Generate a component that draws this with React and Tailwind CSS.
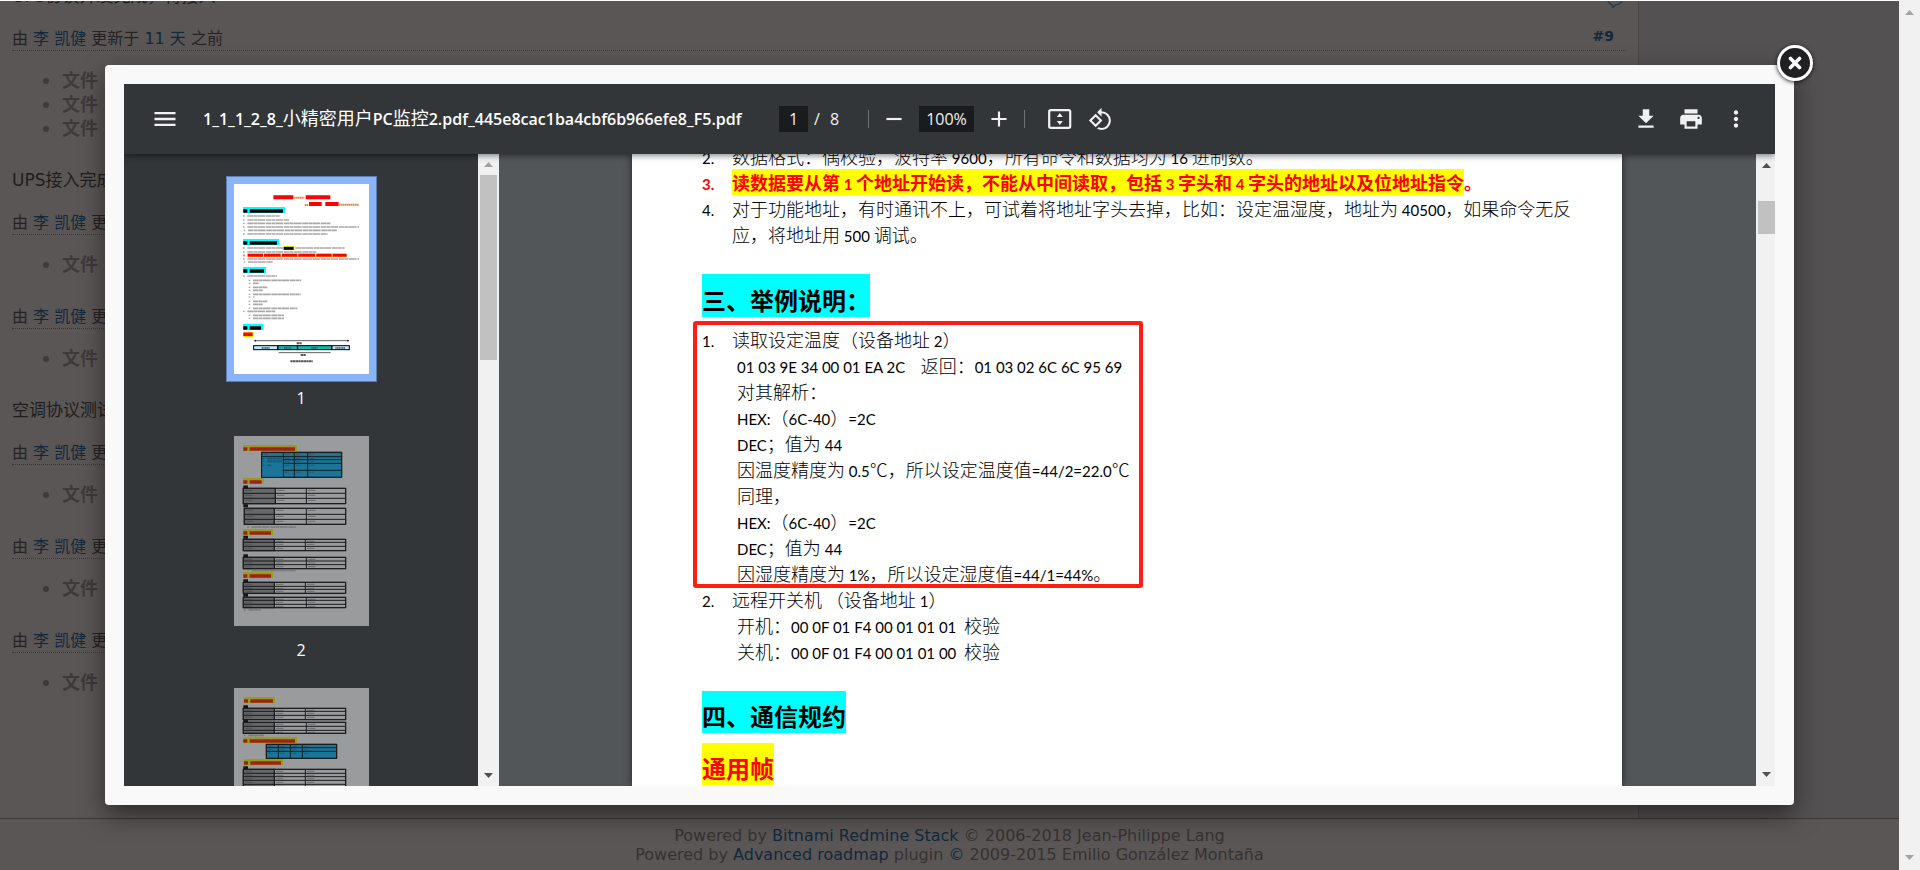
import React, { useState } from 'react'
import {
  MdMenu,
  MdRemove,
  MdAdd,
  MdRotate90DegreesCcw,
  MdFileDownload,
  MdPrint,
  MdMoreVert
} from 'react-icons/md'

const journals = [
  { id: 1, time: '11 天', files: 3, note: 'UPS接入完成' },
  { id: 2, files: 1 },
  { id: 3, files: 1, note: '空调协议测试' },
  { id: 4, files: 1 },
  { id: 5, files: 1 },
  { id: 6, files: 1 }
]

const readExample = [
  '01 03 9E 34 00 01 EA 2C    返回：01 03 02 6C 6C 95 69',
  '对其解析：',
  'HEX:（6C-40）=2C',
  'DEC；值为 44',
  '因温度精度为 0.5℃，所以设定温度值=44/2=22.0℃',
  '同理，',
  'HEX:（6C-40）=2C',
  'DEC；值为 44',
  '因湿度精度为 1%，所以设定湿度值=44/1=44%。'
]

const powerExample = [
  '开机：00 0F 01 F4 00 01 01 01  校验',
  '关机：00 0F 01 F4 00 01 01 00  校验'
]

// 西文和中文使用不同的字体与字号
const Mixed = ({ text, bold }) =>
  text.split(/([\x20-\x7e]+)/).map((part, i) =>
    i % 2 ? (
      <span
        key={i}
        className={
          bold
            ? "font-['Lato','Noto_Sans_CJK_SC',sans-serif] text-[15px] font-bold leading-none"
            : "font-['Lato','Noto_Sans_CJK_SC',sans-serif] text-[15px] font-normal leading-none"
        }
      >
        {part}
      </span>
    ) : (
      part
    )
  )

const Arrow = ({ down, className }) => (
  <svg width="9" height="5" viewBox="0 0 9 5" className={className} aria-hidden="true">
    <path d={down ? 'M0 0h9L4.500 5z' : 'M0 5h9L4.500 0z'} fill="currentColor" />
  </svg>
)

const Journal = ({ time, files, note }) => (
  <section>
    <h4 className="border-b border-dotted border-[#3b3838] text-base leading-[22px] text-[#252323]">
      由 <a href="#user" className="text-[#12283c]">李 凯健</a> 更新于{' '}
      <a href="#time" className="text-[#12283c]">{time || '12 天'}</a> 之前
    </h4>
    <ul className="mt-[18px] list-none pl-[31px] text-lg font-bold leading-6 text-[#3d3a39]">
      {Array.from({ length: files }, (_, i) => (
        <li key={i} className="flex items-center gap-[13px] leading-6">
          <span className="size-[6px] rounded-full bg-[#3d3a39]" />
          文件
        </li>
      ))}
    </ul>
    {note ? (
      <p className="mb-5 mt-[27px] text-[17px] leading-6 text-[#1f1d1d]">{note}</p>
    ) : (
      <div className="h-[29px]" />
    )}
  </section>
)

const IssuePage = () => (
  <div className="flex h-full flex-col overflow-hidden border-t border-white bg-[#545152] font-['DejaVu_Sans','Noto_Sans_CJK_SC',sans-serif]">
    <div className="flex min-h-0 flex-1">
      <main className="min-w-0 flex-1 overflow-hidden border-r border-[#4a4747] bg-[#5a5655] px-3">
        <div className="-mt-[17px] mb-5 flex justify-between text-[17px] leading-6 text-[#1f1d1d]">
          <p>UPS协议开发完成，待接入</p>
          <svg className="mr-[3px]" width="16" height="24" viewBox="0 0 16 24" fill="none" stroke="#2c3e50" strokeWidth="1.500">
            <path d="M1 16c0-3 3-5 7-5s7 2 7 5-4 5-7 5l-2 3-1-3c-2-1-4-3-4-5z" />
          </svg>
        </div>
        <div className="relative">
          <a href="#note-9" className="absolute right-3 top-0 text-sm font-bold leading-4 text-[#12283c]">#9</a>
          {journals.map((j) => (
            <Journal key={j.id} {...j} />
          ))}
        </div>
      </main>
      <aside className="w-[260px] shrink-0" />
    </div>
    <footer className="h-[52px] border-t border-[#3a3737] bg-[#5a5655] pt-[7px] text-center text-base leading-[19px] text-[#363231]">
      <p>
        Powered by <a href="#redmine" className="text-[#12283c]">Bitnami Redmine Stack</a> © 2006-2018 Jean-Philippe Lang
      </p>
      <p>
        Powered by <a href="#roadmap" className="text-[#12283c]">Advanced roadmap</a> plugin{' '}
        <a href="#license" className="text-[#12283c]">©</a> 2009-2015 Emilio González Montaña
      </p>
    </footer>
  </div>
)

const FitIcon = () => (
  <svg width="24" height="20" viewBox="0 0 24 20" aria-hidden="true">
    <rect x="1.200" y="1.200" width="21" height="17.600" rx="1.500" fill="none" stroke="currentColor" strokeWidth="2.200" />
    <path d="M8.800 8h6L11.800 4zM8.800 12h6l-3 4z" fill="currentColor" />
  </svg>
)

const Toolbar = () => {
  const [page, setPage] = useState('1')
  const [zoom, setZoom] = useState('100%')

  return (
    <div className="relative z-10 flex h-[70px] shrink-0 items-center bg-[#323639] pl-4 pr-[26px] font-['Open_Sans','Noto_Sans_CJK_SC',sans-serif] text-base text-[#f1f1f1] shadow-[0_2px_6px_rgba(0,0,0,0.45)]">
      <button aria-label="菜单" className="ml-[11px] w-7"><MdMenu size={28} /></button>
      <h1 className="ml-6 w-[544px] whitespace-nowrap font-semibold text-white">
        1_1_1_2_8_<span className="text-lg font-normal leading-none">小精密用户</span>PC
        <span className="text-lg font-normal leading-none">监控</span>2.pdf_445e8cac1ba4cbf6b966efe8_F5.pdf
      </h1>
      <input
        aria-label="页码"
        value={page}
        onChange={(e) => setPage(e.target.value)}
        className="ml-8 h-[26px] w-[29px] bg-[#191b1c] text-center"
      />
      <span className="ml-[6px] w-[10px]">/</span>
      <span className="ml-[6px] w-[10px]">8</span>
      <span className="ml-7 h-[18px] w-px bg-[#6f7274]" />
      <button aria-label="缩小" className="ml-3"><MdRemove size={26} /></button>
      <input
        aria-label="缩放"
        value={zoom}
        onChange={(e) => setZoom(e.target.value)}
        className="ml-3 h-[26px] w-[55px] bg-[#191b1c] text-center"
      />
      <button aria-label="放大" className="ml-3"><MdAdd size={26} /></button>
      <span className="ml-3 h-[18px] w-px bg-[#6f7274]" />
      <button aria-label="适合页面" className="ml-[23px]"><FitIcon /></button>
      <button aria-label="旋转" className="ml-4"><MdRotate90DegreesCcw size={25} /></button>
      <div className="ml-auto flex gap-[19px]">
        <button aria-label="下载"><MdFileDownload size={26} /></button>
        <button aria-label="打印"><MdPrint size={26} /></button>
        <button aria-label="更多"><MdMoreVert size={26} /></button>
      </div>
    </div>
  )
}

// 缩略图里的一行小字: [x, y, 宽度]
const TextRows = ({ rows, color = '#a9a9a9' }) =>
  rows.map(([x, y, w], i) => (
    <g key={i} stroke={color}>
      <path d={`M${x} ${y}h5`} strokeWidth="4" />
      <path d={`M${x + 13} ${y}h${Math.max(w - 13, 4)}`} strokeWidth="5" strokeDasharray="17 1 11 1 23 2" />
    </g>
  ))

const Headline = ({ x, y, w, h = 18, bg, color }) => (
  <g>
    <rect x={x} y={y} width={w} height={h} fill={bg} />
    <path d={`M${x + 1} ${y + h / 2 + 3}h12M${x + 20} ${y + h / 2 + 3}h${w - 26}`} stroke={color} strokeWidth="10" />
  </g>
)

// cols / rows 是网格线的坐标
const Grid = ({ cols, rows, fill, head }) => {
  const [left, right] = [cols[0], cols[cols.length - 1]]
  const [top, bottom] = [rows[0], rows[rows.length - 1]]
  return (
    <g stroke="#1b1c1d" strokeWidth="3">
      <rect x={left} y={top} width={right - left} height={bottom - top} fill={fill} />
      {head && <rect x={left} y={top} width={cols[1] - left} height={bottom - top} fill="#666869" />}
      {cols.map((c) => <path key={`c${c}`} d={`M${c} ${top}V${bottom}`} />)}
      {rows.map((r) => <path key={`r${r}`} d={`M${left} ${r}H${right}`} />)}
      {rows.slice(0, -1).map((r) =>
        cols.slice(0, -1).map((c) => (
          <path key={`${c}-${r}`} d={`M${c + 5} ${r + 6}h${head ? 22 : 14}`} stroke="#3c4042" strokeOpacity="0.500" />
        ))
      )}
    </g>
  )
}

const ThumbOne = () => (
  <svg className="w-full" viewBox="42 42 405 570">
    <rect x="42" y="42" width="405" height="570" fill="#fff" />
    <path d="M160 82h60M257 82h74M267 102h38M316 102h40" stroke="#f00" strokeWidth="12" />
    <path d="M221 83h32M254 105h12M357 104h60" stroke="#e08a4a" strokeWidth="6" strokeDasharray="5 1" />
    <Headline x={69} y={111} w={126} bg="#0ff" color="#000" />
    <TextRows
      rows={[
        [69, 138, 110], [69, 150, 138], [69, 160, 262], [69, 171, 348], [71, 181, 279], [69, 192, 254],
        [69, 234, 120], [213, 234, 161], [69, 246, 220], [69, 267, 348], [71, 276, 88],
        [69, 318, 102], [86, 331, 158], [86, 340, 30], [86, 352, 56], [86, 361, 42], [86, 373, 156], [86, 381, 15],
        [86, 394, 56], [86, 403, 42], [86, 415, 146], [69, 424, 98], [86, 436, 106], [86, 445, 106]
      ]}
    />
    <Headline x={69} y={207} w={108} bg="#0ff" color="#000" />
    <rect x="189" y="228" width="35" height="12" fill="#ff0" />
    <path d="M191 235h30" stroke="#000" strokeWidth="9" />
    <rect x="81" y="250" width="299" height="12" fill="#ff0" />
    <path d="M83 256h297" stroke="#f00" strokeWidth="9" strokeDasharray="46 3 50 4" />
    <path d="M69 256h6" stroke="#e08a4a" strokeWidth="5" />
    <Headline x={69} y={291} w={69} bg="#0ff" color="#000" />
    <Headline x={69} y={462} w={60} bg="#0ff" color="#000" />
    <rect x="69" y="485" width="32" height="16" fill="#ff0" />
    <path d="M70 493h28" stroke="#f00" strokeWidth="11" />
    <path d="M103 512h284M176 548h156" stroke="#111" strokeWidth="2" />
    <path d="M102 512l6-3v6zM388 512l-6-3v6z" fill="#111" />
    <path d="M230 520h16M242 555h16M211 574h67" stroke="#555" strokeWidth="6" strokeDasharray="7 1" />
    <g stroke="#000" strokeWidth="3">
      <rect x="101" y="527" width="72" height="12" fill="#c5e8fb" />
      <rect x="174" y="527" width="58" height="12" fill="#14b8ae" />
      <rect x="233" y="527" width="102" height="12" fill="#14b8ae" />
      <rect x="336" y="527" width="52" height="12" fill="#c5e8fb" />
    </g>
    <path d="M125 534h24M192 534h22M274 534h18M346 534h30" stroke="#33566a" strokeWidth="5" strokeDasharray="4 1" />
  </svg>
)

const ThumbTwo = () => (
  <svg className="w-full" viewBox="42 30 405 570">
    <rect x="42" y="30" width="405" height="570" fill="#999b9c" />
    <Headline x={69} y={57} w={162} bg="#9a9a1c" color="#9c2416" />
    <Grid cols={[125, 190, 223, 263, 365]} rows={[79, 92, 101, 112, 133, 154]} fill="#1a7599" />
    <rect x="127" y="94" width="61" height="58" fill="#1a7599" />
    <TextRows rows={[[128, 98, 58], [128, 106, 58], [128, 118, 26]]} color="#145a76" />
    <Headline x={69} y={156} w={62} bg="#9a9a1c" color="#9c2416" />
    <Grid head cols={[70, 166, 259, 377]} rows={[187, 202, 217, 233]} fill="#999b9c" />
    <Grid head cols={[73, 163, 259, 377]} rows={[247, 265, 280, 295]} fill="#999b9c" />
    <Headline x={69} y={309} w={90} bg="#9a9a1c" color="#9c2416" />
    <Grid head cols={[70, 163, 256, 377]} rows={[340, 349, 361, 374]} fill="#999b9c" />
    <Grid head cols={[70, 163, 259, 377]} rows={[394, 405, 416, 428]} fill="#999b9c" />
    <Headline x={69} y={438} w={90} bg="#9a9a1c" color="#9c2416" />
    <Grid head cols={[70, 163, 256, 377]} rows={[469, 481, 490, 502]} fill="#999b9c" />
    <Grid head cols={[70, 163, 259, 377]} rows={[514, 523, 535, 545]} fill="#999b9c" />
    <path d="M70 183h14M70 239h14M70 334h14M70 389h14M70 464h14M70 508h14" stroke="#151617" strokeWidth="9" />
    <TextRows rows={[[82, 303, 146], [82, 433, 146], [72, 552, 50]]} color="#77797a" />
  </svg>
)

const ThumbThree = () => (
  <svg className="w-full" viewBox="42 141 405 570">
    <rect x="42" y="141" width="405" height="570" fill="#999b9c" />
    <Headline x={71} y={168} w={94} bg="#9a9a1c" color="#9c2416" />
    <Grid head cols={[70, 163, 256, 377]} rows={[202, 211, 223, 236]} fill="#999b9c" />
    <Grid head cols={[70, 163, 259, 377]} rows={[244, 256, 268, 277]} fill="#999b9c" />
    <Headline x={69} y={288} w={162} bg="#9a9a1c" color="#9c2416" />
    <Grid cols={[139, 175, 211, 247, 350]} rows={[310, 320, 331, 352]} fill="#1a7599" />
    <Headline x={71} y={354} w={118} bg="#9a9a1c" color="#9c2416" />
    <Grid head cols={[70, 163, 256, 377]} rows={[385, 397, 407, 418, 430, 442]} fill="#999b9c" />
    <path d="M70 197h14M70 240h14M70 380h14" stroke="#151617" strokeWidth="9" />
    <TextRows rows={[[72, 283, 60]]} color="#77797a" />
  </svg>
)

const thumbs = [ThumbOne, ThumbTwo, ThumbThree]

const Sidebar = ({ current, onSelect }) => (
  <aside className="flex w-[375px] shrink-0 bg-[#323639]">
    <div className="flex flex-1 flex-col items-center gap-5 overflow-hidden pt-[22px]">
      {thumbs.map((Thumb, i) => (
        <button
          key={i}
          aria-label={`第 ${i + 1} 页`}
          onClick={() => onSelect(i)}
          className="shrink-0 font-['Open_Sans',sans-serif] text-base leading-5 text-white"
        >
          <span
            className={
              current === i
                ? 'block h-[206px] w-[151px] border border-[#5f7dad] bg-[#8ab4f8] p-[7px]'
                : 'block h-[206px] w-[151px] border border-transparent p-[7px]'
            }
          >
            <Thumb />
          </span>
          <span className="mt-[6px] block">{i + 1}</span>
        </button>
      ))}
    </div>
    <div className="flex w-[21px] flex-col items-center bg-[#f1f1f1] py-2">
      <Arrow className="shrink-0 text-[#a3a3a3]" />
      <div className="mt-2 h-[185px] w-[17px] bg-[#c1c1c1]" />
      <Arrow down className="mt-auto shrink-0 text-[#505050]" />
    </div>
  </aside>
)

const Item = ({ no, bold, children }) => (
  <div className="flex">
    <span className="w-[30px] shrink-0"><Mixed text={no} bold={bold} /></span>
    <span className="whitespace-pre">{children}</span>
  </div>
)

const Document = () => (
  <div className="flex min-w-0 flex-1 bg-[#525659]">
    <div className="flex flex-1 justify-center overflow-hidden pr-px">
      <article className="w-[990px] bg-white pl-[70px] font-['Noto_Sans_CJK_SC',sans-serif] text-lg font-light leading-[26px] text-black shadow-[0_0_7px_rgba(0,0,0,0.6)]">
        <div className="-mt-[11px] leading-[26px]">
          <Item no="2."><Mixed text="数据格式：偶校验，波特率 9600，所有命令和数据均为 16 进制数。" /></Item>
          <div className="font-bold text-[#f00]">
            <Item no="3." bold>
              <mark className="bg-[#ff0] text-[#f00]">
                <Mixed bold text="读数据要从第 1 个地址开始读，不能从中间读取，包括 3 字头和 4 字头的地址以及位地址指令" />
              </mark>
              。
            </Item>
          </div>
          <Item no="4.">
            <Mixed text="对于功能地址，有时通讯不上，可试着将地址字头去掉，比如：设定温湿度，地址为 40500，如果命令无反" />
            <br />
            <Mixed text="应，将地址用 500 调试。" />
          </Item>
        </div>

        <h2 className="mt-[27px] w-fit bg-[#0ff] pb-px pt-[10px] text-2xl font-bold leading-8">三、举例说明：</h2>
        <div className="relative mt-[9px]">
          <Item no="1."><Mixed text="读取设定温度（设备地址 2）" /></Item>
          {readExample.map((line, i) => (
            <p key={i} className="whitespace-pre pl-[35px]"><Mixed text={line} /></p>
          ))}
          <div className="absolute -bottom-[2px] -left-[9px] -top-[5px] w-[450px] rounded-[3px] border-4 border-[#ff1e12]" />
        </div>
        <Item no="2."><Mixed text="远程开关机 （设备地址 1）" /></Item>
        {powerExample.map((line, i) => (
          <p key={i} className="whitespace-pre pl-[35px]"><Mixed text={line} /></p>
        ))}

        <h2 className="mt-[27px] w-fit bg-[#0ff] pb-px pt-[9px] text-2xl font-bold leading-8">四、通信规约</h2>
        <h3 className="mt-[10px] w-fit bg-[#ff0] pb-px pt-[9px] text-2xl font-bold leading-8 text-[#f00]">通用帧</h3>
      </article>
    </div>
    <div className="flex w-[19px] flex-col items-center bg-[#f1f1f1] py-[9px] pl-[2px]">
      <Arrow className="shrink-0 text-[#505050]" />
      <div className="mt-[33px] h-[33px] w-[17px] bg-[#c1c1c1]" />
      <Arrow down className="mt-auto shrink-0 text-[#505050]" />
    </div>
  </div>
)

const PdfDialog = () => {
  const [current, setCurrent] = useState(0)

  return (
    <div role="dialog" className="relative flex min-w-0 flex-1 rounded bg-[#f9f9f9] p-[19px] shadow-[0_10px_25px_rgba(0,0,0,0.5)]">
      <div className="flex min-w-0 flex-1 flex-col overflow-hidden">
        <Toolbar />
        <div className="flex min-h-0 flex-1">
          <Sidebar current={current} onSelect={setCurrent} />
          <Document />
        </div>
      </div>
      <button
        aria-label="关闭"
        className="absolute -right-[19px] -top-5 flex size-9 items-center justify-center rounded-full border-[3px] border-white bg-[#202022] shadow-[0_1px_4px_rgba(0,0,0,0.8)]"
      >
        <svg width="14" height="14" viewBox="0 0 14 14">
          <path d="M2.500 2.500l9 9M11.500 2.500l-9 9" stroke="#fff" strokeWidth="3.600" strokeLinecap="round" />
        </svg>
      </button>
    </div>
  )
}

const App = () => (
  <div className="flex h-screen overflow-hidden">
    <div className="relative min-w-0 flex-1">
      <IssuePage />
      <div className="absolute inset-0 flex px-[105px] py-[65px]">
        <PdfDialog />
      </div>
    </div>
    <div className="flex w-[21px] shrink-0 flex-col items-center justify-between bg-[#f1f1f1] py-[10px] text-[#a3a3a3]">
      <Arrow />
      <Arrow down />
    </div>
  </div>
)

export default App
